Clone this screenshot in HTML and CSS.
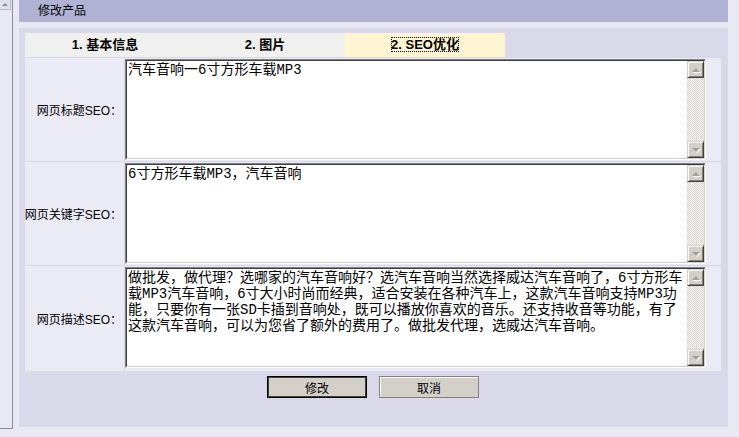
FILE: index.html
```html
<!DOCTYPE html>
<html lang="zh-CN">

<head>
  <meta charset="UTF-8" />
  <title>修改产品</title>
  <link rel="stylesheet" href="styles.css">
</head>

<body>
  <div class="page">
    <!-- left frame edge -->
    <div class="side"><span class="side-up"></span></div>

    <div class="main">
      <div class="titlebar">修改产品</div>

      <div class="panel">
        <div class="tabs">
          <div class="tab">1. 基本信息</div>
          <div class="tab">2. 图片</div>
          <div class="tab tab-on"><span>2. SEO优化</span></div>
        </div>

        <div class="form">
          <label class="label" for="seoTitle">网页标题SEO：</label>
          <div class="cell">
            <div class="box">
              <div class="box-in">
                <textarea id="seoTitle">汽车音响一6寸方形车载MP3</textarea>
                <div class="sbar"><span class="sb-btn sb-up"></span><span class="sb-track"></span><span class="sb-btn sb-down"></span></div>
              </div>
            </div>
          </div>

          <label class="label" for="seoKeys">网页关键字SEO：</label>
          <div class="cell">
            <div class="box">
              <div class="box-in">
                <textarea id="seoKeys">6寸方形车载MP3，汽车音响</textarea>
                <div class="sbar"><span class="sb-btn sb-up"></span><span class="sb-track"></span><span class="sb-btn sb-down"></span></div>
              </div>
            </div>
          </div>

          <label class="label last" for="seoDesc">网页描述SEO：</label>
          <div class="cell last">
            <div class="box">
              <div class="box-in">
                <textarea id="seoDesc">做批发，做代理？选哪家的汽车音响好？选汽车音响当然选择威达汽车音响了，6寸方形车载MP3汽车音响，6寸大小时尚而经典，适合安装在各种汽车上，这款汽车音响支持MP3功能，只要你有一张SD卡插到音响处，既可以播放你喜欢的音乐。还支持收音等功能，有了这款汽车音响，可以为您省了额外的费用了。做批发代理，选威达汽车音响。</textarea>
                <div class="sbar"><span class="sb-btn sb-up"></span><span class="sb-track"></span><span class="sb-btn sb-down"></span></div>
              </div>
            </div>
          </div>
        </div>

        <div class="actions">
          <button class="btn btn-default">修改</button>
          <button class="btn">取消</button>
        </div>
      </div>
    </div>
  </div>
</body>

</html>
```

FILE: styles.css
```css
/* Reset */
* {
    margin: 0;
    padding: 0;
    box-sizing: border-box;
}

body {
    background-color: #e9e9f4;
    font-family: "Liberation Sans", "Noto Sans CJK SC", sans-serif;
    font-size: 12px;
    color: #000;
}

.page {
    display: flex;
    height: 437px;
}

/* left frame edge */
.side {
    width: 13px;
    height: 429px;
    border-right: 1px solid #8a8aa8;
    border-bottom: 1px solid #8a8aa8;
}

.side-up {
    display: flex;
    align-items: center;
    justify-content: center;
    width: 11px;
    height: 10px;
    background-color: #e2e2ec;
    border-right: 1px solid #b8b8c8;
    border-bottom: 1px solid #b8b8c8;
}

.side-up::before {
    content: "";
    border-left: 3px solid transparent;
    border-right: 3px solid transparent;
    border-bottom: 3px solid #8a8aa0;
}

.main {
    width: 709px;
    margin-left: 6px;
}

/* title bar */
.titlebar {
    height: 22px;
    line-height: 22px;
    padding-left: 19px;
    background-color: #b1b3d5;
}

/* content panel */
.panel {
    height: 399px;
    margin-top: 6px;
    padding: 5px 7px 0 6px;
    background-color: #d9d9e9;
}

.tabs {
    display: flex;
    height: 24px;
}

.tab {
    width: 160px;
    line-height: 24px;
    text-align: center;
    font-size: 13px;
    font-weight: bold;
    background-color: #f0f0ef;
}

.tab-on {
    background-color: #fff5d0;
}

.tab-on span {
    outline: 1px dotted #000;
    outline-offset: -1px;
}

/* form rows */
.form {
    display: grid;
    grid-template-columns: 99px 1fr;
    gap: 1px;
    margin-top: 1px;
}

.label {
    display: flex;
    align-items: center;
    justify-content: flex-end;
    padding-right: 2px;
    white-space: nowrap;
    background-color: #ebebf5;
}

.cell {
    padding: 1px 15px 1px 0;
    background-color: #ebebf5;
}

.cell.last {
    padding-bottom: 3px;
}

/* sunken text box */
.box {
    height: 101px;
    border: 1px solid;
    border-color: #808080 #fff #fff #808080;
}

.box-in {
    display: flex;
    height: 100%;
    border: 1px solid;
    border-color: #404040 #d4d0c8 #d4d0c8 #404040;
    background-color: #fff;
}

.box textarea {
    flex: 1;
    border: none;
    outline: none;
    resize: none;
    overflow: hidden;
    padding: 1px 0 0 1px;
    font-family: "Liberation Mono", "Noto Sans CJK SC", monospace;
    font-size: 14px;
    line-height: 16px;
    color: #000;
    background-color: #fff;
}

/* classic scrollbar */
.sbar {
    display: flex;
    flex-direction: column;
    width: 17px;
}

.sb-track {
    flex: 1;
    background: repeating-conic-gradient(#d4d0c8 0 25%, #fff 0 50%) 0 0 / 2px 2px;
}

.sb-btn {
    display: flex;
    align-items: center;
    justify-content: center;
    height: 17px;
    background-color: #d4d0c8;
    border: 1px solid;
    border-color: #d4d0c8 #404040 #404040 #d4d0c8;
    box-shadow: inset 1px 1px 0 #fff, inset -1px -1px 0 #808080;
}

.sb-btn::before {
    content: "";
    border-left: 4px solid transparent;
    border-right: 4px solid transparent;
    filter: drop-shadow(1px 1px 0 #fff);
}

.sb-up::before {
    border-bottom: 4px solid #a0a0a0;
}

.sb-down::before {
    border-top: 4px solid #a0a0a0;
}

/* buttons */
.actions {
    display: flex;
    justify-content: center;
    gap: 12px;
    margin-top: 5px;
}

.btn {
    width: 100px;
    height: 22px;
    font-family: "Liberation Sans", "Noto Sans CJK SC", sans-serif;
    font-size: 12px;
    color: #000;
    background-color: #d4d0c8;
    border: 1px solid #808080;
    box-shadow: inset 1px 1px 0 #fff;
    cursor: pointer;
}

.btn-default {
    border: 1px solid #000;
    box-shadow: inset 1px 1px 0 #404040, inset -1px -1px 0 #404040;
}
```
